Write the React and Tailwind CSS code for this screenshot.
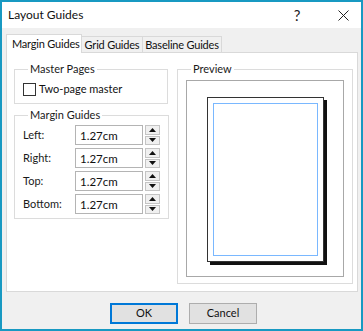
import { useState } from 'react';

const font = { fontFamily: 'Lato, "Noto Sans", sans-serif' };

const Spinner = () => (
  <div className="flex flex-col gap-[1px] w-[15px] h-[20px]">
    <button className="flex-1 flex items-center justify-center bg-[#f0f0f0] border border-[#c4c4c4]">
      <svg width="7" height="4" viewBox="0 0 7 4"><path d="M0 4 L3.5 0 L7 4 Z" fill="#111" /></svg>
    </button>
    <button className="flex-1 flex items-center justify-center bg-[#f0f0f0] border border-[#c4c4c4]">
      <svg width="7" height="4" viewBox="0 0 7 4"><path d="M0 0 L7 0 L3.5 4 Z" fill="#111" /></svg>
    </button>
  </div>
);

const MarginRow = ({ label, value }) => (
  <div className="flex items-center h-[20px]">
    <span className="w-[52px] text-[11px] text-[#1a1a1a]">{label}</span>
    <input
      type="text"
      defaultValue={value}
      className="w-[68px] h-[20px] border border-[#b4b4b4] bg-white px-[4px] text-[11.5px] text-[#111] outline-none"
    />
    <div className="ml-[2px]">
      <Spinner />
    </div>
  </div>
);

const GroupBox = ({ title, className, children }) => (
  <fieldset className={`border border-[#dcdcdc] px-[8px] ${className}`}>
    <legend className="ml-[5px] px-[2px] text-[11px] leading-[16px] text-[#1a1a1a] whitespace-nowrap">{title}</legend>
    {children}
  </fieldset>
);

const App = () => {
  const [tab, setTab] = useState('margin');
  const [twoPage, setTwoPage] = useState(false);
  const margins = [
    { label: 'Left:', value: '1.27cm' },
    { label: 'Right:', value: '1.27cm' },
    { label: 'Top:', value: '1.27cm' },
    { label: 'Bottom:', value: '1.27cm' },
  ];
  const tabs = [
    { id: 'margin', name: 'Margin Guides', w: 'w-[76px]' },
    { id: 'grid', name: 'Grid Guides', w: 'w-[61px]' },
    { id: 'baseline', name: 'Baseline Guides', w: 'w-[79px]' },
  ];

  return (
    <div style={font} className="w-[363px] h-[331px] border-2 border-[#1899c2] flex flex-col bg-[#f0f0f0] text-[#1a1a1a]">
      {/* title bar */}
      <div className="h-[26px] bg-white flex items-center pl-[6px] shrink-0">
        <span className="text-[12px] text-[#111] flex-1">Layout Guides</span>
        <span className="w-[56px] text-center text-[15px] text-[#222]">?</span>
        <span className="w-[36px] flex justify-center">
          <svg width="11" height="11" viewBox="0 0 11 11"><path d="M0.5 0.5 L10.5 10.5 M10.5 0.5 L0.5 10.5" stroke="#222" strokeWidth="1" /></svg>
        </span>
      </div>

      {/* body */}
      <div className="flex-1 flex flex-col pt-[6px] px-[4px]">
        <div className="flex items-end h-[18px]">
          {tabs.map((t) =>
            t.id === tab ? (
              <button
                key={t.id}
                onClick={() => setTab(t.id)}
                className={`${t.w} h-[19px] -mb-[1px] bg-white border border-b-0 border-[#d9d9d9] text-[11px] tracking-[-0.2px] text-[#111] relative z-10 text-left pl-[5px] whitespace-nowrap`}
              >
                {t.name}
              </button>
            ) : (
              <button
                key={t.id}
                onClick={() => setTab(t.id)}
                className={`${t.w} h-[16px] bg-[#f0f0f0] border border-b-0 border-l-0 border-[#d9d9d9] text-[11px] tracking-[-0.2px] text-[#111] leading-[14px] whitespace-nowrap`}
              >
                {t.name}
              </button>
            )
          )}
        </div>

        <div className="w-[352px] h-[240px] bg-white border border-[#d9d9d9] flex pt-[8px] pl-[7px] gap-[9px]">
          <div className="w-[154px] flex flex-col gap-[3px]">
            <GroupBox title="Master Pages" className="h-[43px]">
              <label className="flex items-center gap-[3px] mt-[4px] cursor-default">
                <span
                  onClick={() => setTwoPage(!twoPage)}
                  className="w-[13px] h-[13px] border border-[#333] bg-white flex items-center justify-center"
                >
                  {twoPage && (
                    <svg width="9" height="9" viewBox="0 0 9 9"><path d="M1 4.5 L3.5 7 L8 1.5" stroke="#111" strokeWidth="1.3" fill="none" /></svg>
                  )}
                </span>
                <span className="text-[11px] text-[#111] whitespace-nowrap">Two-page master</span>
              </label>
            </GroupBox>
            <GroupBox title="Margin Guides" className="h-[112px]">
              <div className="flex flex-col gap-[3px] mt-[2px]">
                {margins.map((m) => (
                  <MarginRow key={m.label} label={m.label} value={m.value} />
                ))}
              </div>
            </GroupBox>
          </div>

          <GroupBox title="Preview" className="w-[176px] h-[223px]">
            <div className="mt-[3px] w-[158px] h-[197px] border border-[#a8a8a8] bg-white flex justify-center pt-[16px]">
              <div className="w-[117px] h-[165px] bg-white border border-[#333] shadow-[3px_3px_0_0_#111] p-[5px] ml-[1px]">
                <div className="w-full h-full border border-[#7ab8ff]" />
              </div>
            </div>
          </GroupBox>
        </div>

        <div className="flex justify-center gap-[11px] mt-[11px] pl-[4px]">
          <button className="w-[68px] h-[21px] bg-[#e1e1e1] border-2 border-[#0078d7] text-[11px] text-[#111]">OK</button>
          <button className="w-[68px] h-[21px] bg-[#e1e1e1] border border-[#adadad] text-[11px] text-[#111]">Cancel</button>
        </div>
      </div>
    </div>
  );
};

export default App;
